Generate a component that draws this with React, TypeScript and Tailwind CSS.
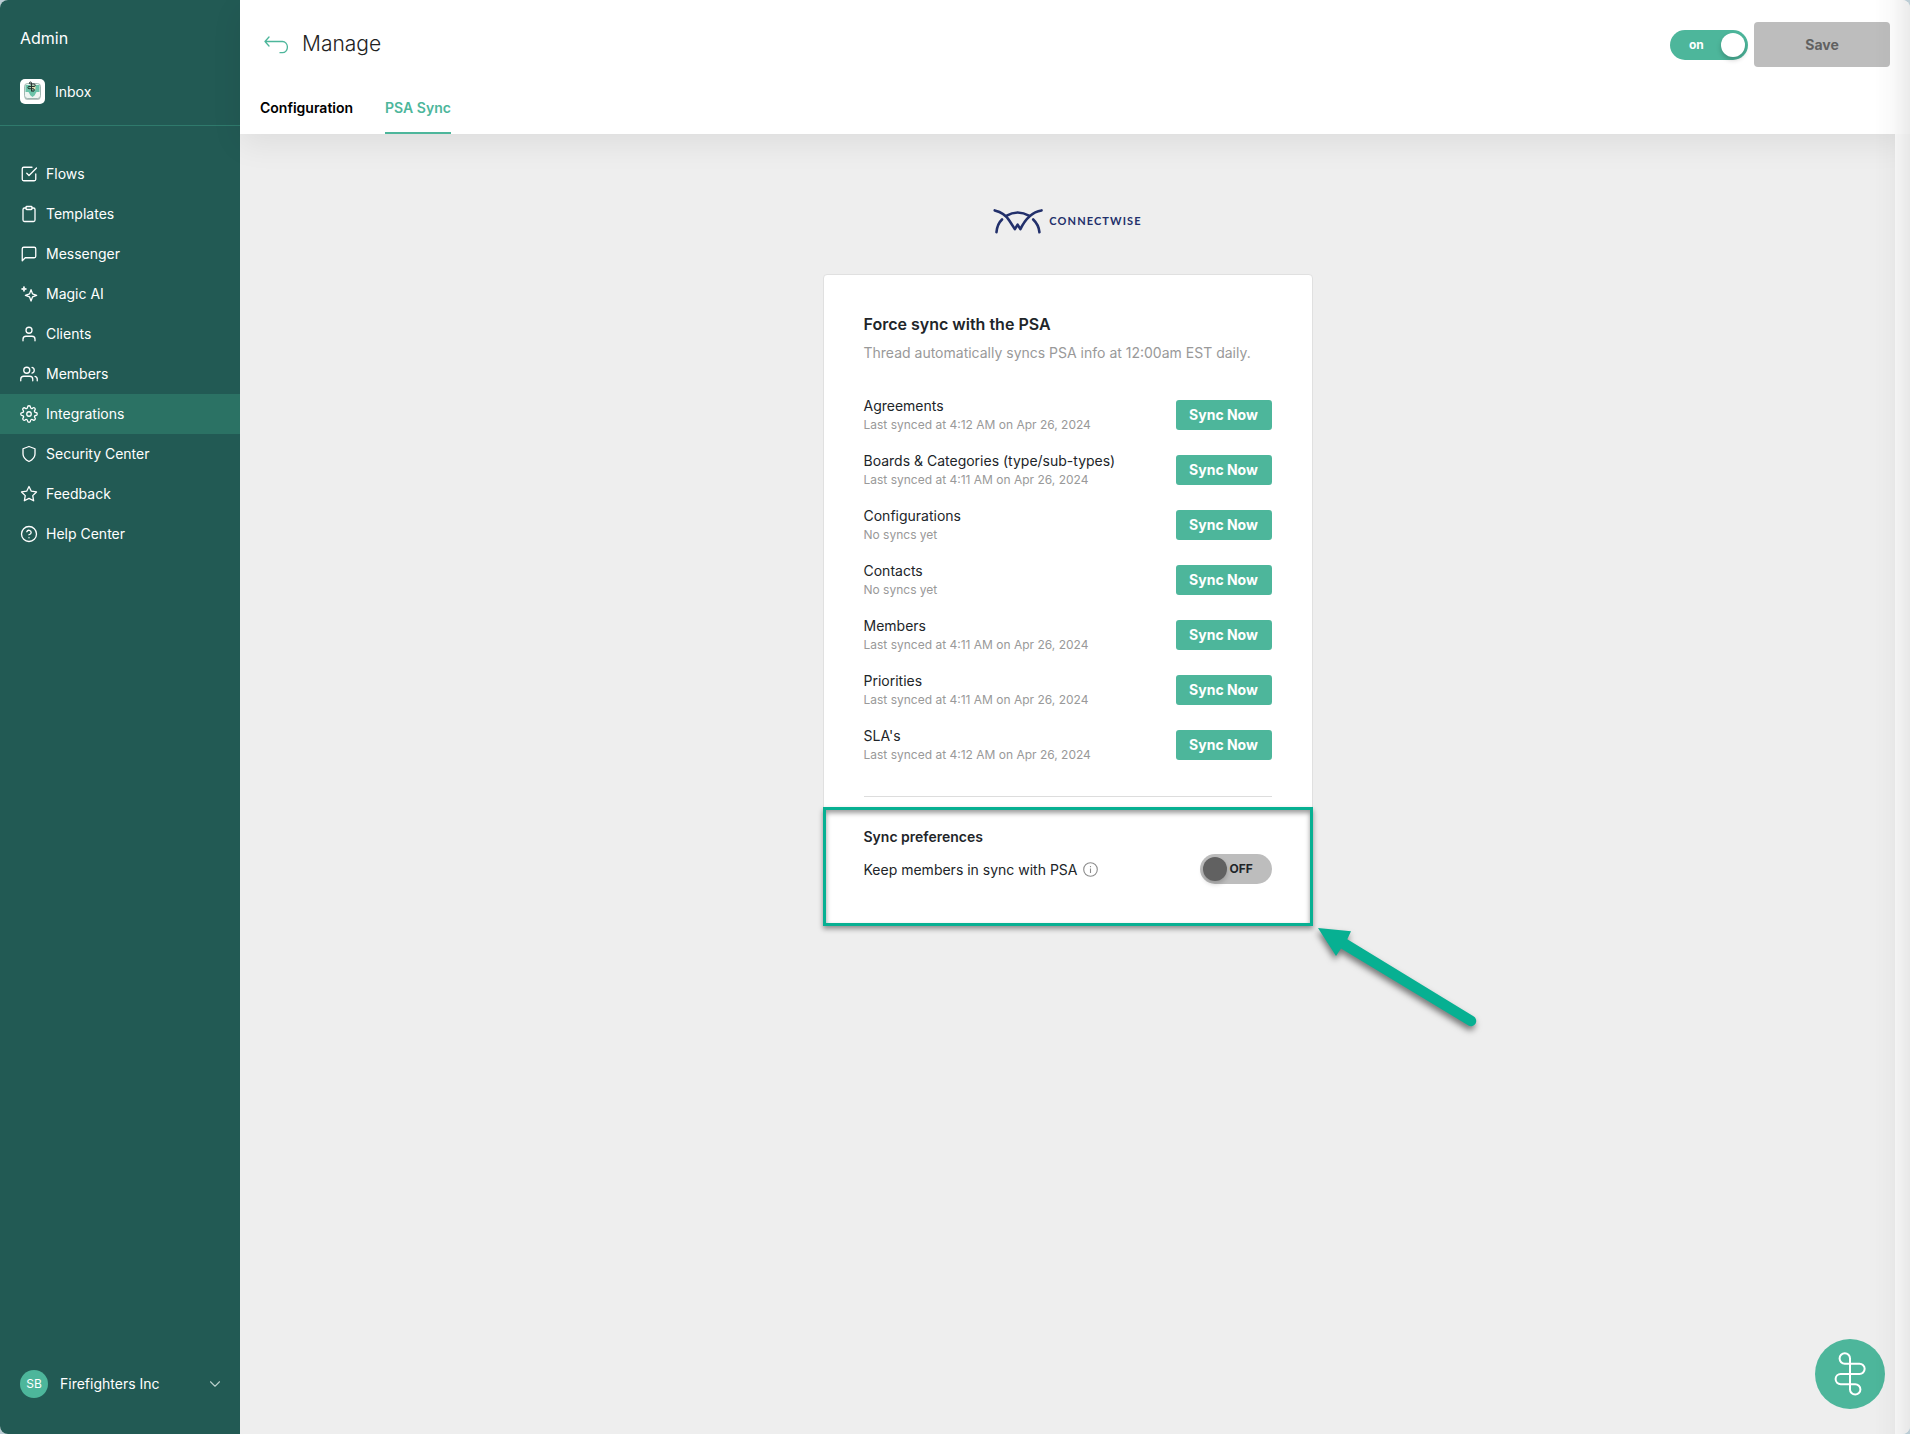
import React, { useState } from 'react';
import {
  FiCheckSquare,
  FiChevronDown,
  FiClipboard,
  FiHelpCircle,
  FiMessageSquare,
  FiSettings,
  FiShield,
  FiStar,
  FiUser,
  FiUsers,
} from 'react-icons/fi';

const SparkleIcon: React.FC = () => (
  <svg width="18" height="18" viewBox="0 0 24 24" fill="none" stroke="currentColor" strokeWidth="1.75" strokeLinejoin="round">
    <path d="M14.7 6.300l2 5.500 5.500 2-5.500 2-2 5.500-2-5.500-5.500-2 5.500-2z" />
    <path d="M5.300 1.800l1 2.500 2.500 1-2.500 1-1 2.500-1-2.500-2.500-1 2.500-1z" fill="currentColor" strokeWidth="1" />
  </svg>
);

const navItems: { label: string; icon: React.ReactNode; active?: boolean }[] = [
  { label: 'Flows', icon: <FiCheckSquare size={18} strokeWidth={1.75} /> },
  { label: 'Templates', icon: <FiClipboard size={18} strokeWidth={1.75} /> },
  { label: 'Messenger', icon: <FiMessageSquare size={18} strokeWidth={1.75} /> },
  { label: 'Magic AI', icon: <SparkleIcon /> },
  { label: 'Clients', icon: <FiUser size={18} strokeWidth={1.75} /> },
  { label: 'Members', icon: <FiUsers size={18} strokeWidth={1.75} /> },
  { label: 'Integrations', icon: <FiSettings size={18} strokeWidth={1.75} />, active: true },
  { label: 'Security Center', icon: <FiShield size={18} strokeWidth={1.75} /> },
  { label: 'Feedback', icon: <FiStar size={18} strokeWidth={1.75} /> },
  { label: 'Help Center', icon: <FiHelpCircle size={18} strokeWidth={1.75} /> },
];

const syncItems = [
  { name: 'Agreements', status: 'Last synced at 4:12 AM on Apr 26, 2024' },
  { name: 'Boards & Categories (type/sub-types)', status: 'Last synced at 4:11 AM on Apr 26, 2024' },
  { name: 'Configurations', status: 'No syncs yet' },
  { name: 'Contacts', status: 'No syncs yet' },
  { name: 'Members', status: 'Last synced at 4:11 AM on Apr 26, 2024' },
  { name: 'Priorities', status: 'Last synced at 4:11 AM on Apr 26, 2024' },
  { name: "SLA's", status: 'Last synced at 4:12 AM on Apr 26, 2024' },
];

const InboxIcon: React.FC = () => (
  <svg width="25" height="25" viewBox="0 0 25 25" fill="none">
    <rect width="25" height="25" rx="5" fill="#fff" />
    <rect x="4.5" y="5.5" width="16" height="15.5" rx="3" fill="#b9c4c2" />
    <rect x="4.5" y="4.5" width="16" height="15" rx="3" fill="#eef4f2" stroke="#8fa9a3" strokeWidth=".8" />
    <path d="M5.5 6h14v7h-3l-2 3.5-2 1.5-2-1.5-2-3.5h-3z" fill="#6cc3a9" />
    <path d="M10.5 6.5h5v4h-5z" fill="#e8dfb4" />
    <path d="M11.500 12.500V4a1 1 0 10-1 1h3.500a1.200 1.200 0 010 2.500H9a1 1 0 000 2.200h4a1.300 1.300 0 11-1.300 1.400" stroke="#26322f" strokeWidth="1" />
  </svg>
);

const Sidebar: React.FC = () => (
  <aside className="flex w-60 shrink-0 flex-col bg-[#225a54] text-white">
    <div className="px-5 pt-7 text-base leading-5">Admin</div>
    <a href="#inbox" className="mt-[31px] flex items-center gap-2.5 px-5 text-sm leading-5">
      <InboxIcon />
      Inbox
    </a>
    <div className="mt-[21px] border-t border-[#2f7a6c]" />
    <nav className="mt-7 flex flex-col">
      {navItems.map((item) => (
        <a
          key={item.label}
          href="#"
          className={`flex h-10 items-center gap-2 px-5 text-sm ${item.active ? 'bg-[#2b7264]' : ''}`}
        >
          {item.icon}
          {item.label}
        </a>
      ))}
    </nav>
    <button type="button" className="mt-auto mb-9 flex items-center gap-3 pr-4 pl-5 text-sm">
      <span className="flex size-7 items-center justify-center rounded-full bg-[#4db69b] text-xs">SB</span>
      Firefighters Inc
      <FiChevronDown className="ml-auto text-[#b9cfcb]" size={18} strokeWidth={1.5} />
    </button>
  </aside>
);

const Header: React.FC = () => {
  const [enabled, setEnabled] = useState(true);

  return (
    <header className="relative flex h-[134px] flex-col justify-between bg-white pl-5 shadow-[0_10px_30px_rgba(0,0,0,0.07)]">
      <div className="flex items-center justify-between pt-[22px] pr-5">
        <div className="flex items-center gap-3.5">
          <button type="button" aria-label="Back" className="pl-1">
            <svg width="24" height="18" viewBox="0 0 24 18" fill="none" stroke="#4db69b" strokeWidth="1.3" strokeLinecap="round" strokeLinejoin="round">
              <path d="M5 1L1 5.500l4 4.500M1 5.500h17.500a4.900 5.600 0 010 11.200h-2.500" />
            </svg>
          </button>
          <h1 className="pb-0.5 text-[21px] leading-7 font-light text-[#222]">Manage</h1>
        </div>
        <div className="flex items-center gap-1.5">
          <label className="relative flex h-[30px] w-[78px] items-center rounded-full bg-[#4db69b] pl-[19px] text-xs font-bold text-white">
            <input
              type="checkbox"
              className="sr-only"
              checked={enabled}
              onChange={(e) => setEnabled(e.target.checked)}
            />
            on
            <span className="mr-[3px] ml-auto size-6 rounded-full bg-white shadow-[0_3px_5px_rgba(0,0,0,0.2)]" />
          </label>
          <button type="button" className="h-[45px] w-[136px] rounded bg-[#bdbdbd] text-sm font-bold text-[#616161]">
            Save
          </button>
        </div>
      </div>
      <nav className="flex gap-8 text-sm font-semibold">
        <a href="#configuration" className="pb-[14px] leading-5 text-black">Configuration</a>
        <a href="#psa-sync" className="border-b-2 border-[#4db69b] pb-[14px] leading-5 text-[#4db69b]">PSA Sync</a>
      </nav>
    </header>
  );
};

const ConnectWiseLogo: React.FC = () => (
  <div className="flex items-center gap-1 text-[#22306b]">
    <svg width="52" height="26" viewBox="100 58 150 75" fill="none" stroke="currentColor" strokeWidth="7.5" strokeLinecap="round" strokeLinejoin="round">
      <path d="M105 65Q134 72 147 94L163 119L171 106L179 119Q202 71 240 65" />
      <path d="M110 128Q112 104 126 91M138 81Q171 61 205 81M216 91Q232 106 234 128" />
    </svg>
    <span className="font-[Lato,sans-serif] text-[11px] leading-4 font-bold tracking-widest">CONNECTWISE</span>
  </div>
);

const SyncPreferences: React.FC = () => {
  const [keepInSync, setKeepInSync] = useState(false);

  return (
    <section className="pt-[30px]">
      <h3 className="text-sm leading-5 font-semibold">Sync preferences</h3>
      <div className="mt-[7px] flex items-center justify-between">
        <div className="flex items-center gap-[5px]">
          <label htmlFor="keep-in-sync" className="pt-0.5 text-sm leading-5">Keep members in sync with PSA</label>
          <svg width="15" height="15" viewBox="0 0 15 15" fill="none" stroke="#8c8c8c" strokeWidth="1.1">
            <circle cx="7.5" cy="7.5" r="6.8" />
            <path d="M7.5 6.5v4.500M7.5 4v1.300" />
          </svg>
        </div>
        <label className="flex h-[30px] w-[72px] items-center gap-[3px] rounded-full bg-[#bdbdbd] pl-[3px] text-xs font-bold text-[#212529]">
          <input
            id="keep-in-sync"
            type="checkbox"
            className="sr-only"
            checked={keepInSync}
            onChange={(e) => setKeepInSync(e.target.checked)}
          />
          <span className="size-6 rounded-full bg-[#616161] shadow-[0_3px_5px_rgba(0,0,0,0.2)]" />
          OFF
        </label>
      </div>
    </section>
  );
};

const SyncCard: React.FC = () => (
  <div className="relative w-full max-w-[490px] rounded border border-[#e0e0e0] bg-white p-10 text-[#212529]">
    <h2 className="text-base leading-[18px] font-semibold">Force sync with the PSA</h2>
    <p className="mt-2.5 text-sm leading-5 text-[#999]">Thread automatically syncs PSA info at 12:00am EST daily.</p>

    <ul className="mt-[34px] flex flex-col gap-[19px]">
      {syncItems.map((item) => (
        <li key={item.name} className="flex items-center justify-between">
          <div className="flex flex-col gap-0.5">
            <div className="text-sm leading-[18px]">{item.name}</div>
            <div className="text-xs leading-4 text-[#999]">{item.status}</div>
          </div>
          <button type="button" className="h-[30px] w-24 rounded-[3px] bg-[#4db69b] text-sm font-bold text-white">
            Sync Now
          </button>
        </li>
      ))}
    </ul>

    <div className="mt-[33px] border-t border-[#ddd]" />
    <SyncPreferences />

    {/* highlight frame and pointer drawn over the card */}
    <div className="pointer-events-none absolute -inset-x-px -bottom-0.5 h-[119px] border-[3px] border-[#07b092] shadow-[0_3px_5px_rgba(0,0,0,0.4),inset_0_3px_5px_rgba(0,0,0,0.4)]" />
    <svg
      className="pointer-events-none absolute top-full left-full overflow-visible drop-shadow-[-1px_4px_3px_rgba(0,0,0,0.5)]"
      width="170"
      height="110"
      viewBox="0 0 170 110"
      fill="#07b092"
    >
      <path d="M6 4L39 7.300L35.300 15.300L161.500 92.300A5.200 5.200 0 01156.500 101.500L29 24.500L24 32z" />
    </svg>
  </div>
);

export default function App() {
  return (
    <div className="bg-[#bccdd5] font-[Inter,sans-serif]">
      <div className="relative flex min-h-screen overflow-hidden rounded-lg bg-[#eee]">
        <Sidebar />
        <div className="flex min-w-0 grow flex-col">
          <Header />
          <div className="flex grow">
            <main className="flex grow flex-col items-center pt-[74px]">
              <ConnectWiseLogo />
              <div className="mt-10 flex w-full justify-center">
                <SyncCard />
              </div>
            </main>
            <div className="relative w-[15px] shrink-0 bg-[#fcfcfc]" />
          </div>
        </div>
        <button
          type="button"
          aria-label="Open Thread"
          className="fixed right-[25px] bottom-[25px] size-[70px] rounded-full bg-[#4db69b]"
        >
          <svg width="70" height="70" viewBox="0 0 70 70" fill="none" stroke="#fff" strokeWidth="2" strokeLinejoin="round">
            <path d="M35 19.5A5.2 5.2 0 1029.8 24.7H44.5A5.150 5.150 0 0144.5 35H25.7A5.1 5.1 0 0025.7 45.2H40.2A5.2 5.2 0 1135 50.4z" />
          </svg>
        </button>
        <div className="pointer-events-none absolute inset-y-0 right-0 w-9 bg-linear-to-r from-transparent via-black/2 to-black/8" />
      </div>
    </div>
  );
}
